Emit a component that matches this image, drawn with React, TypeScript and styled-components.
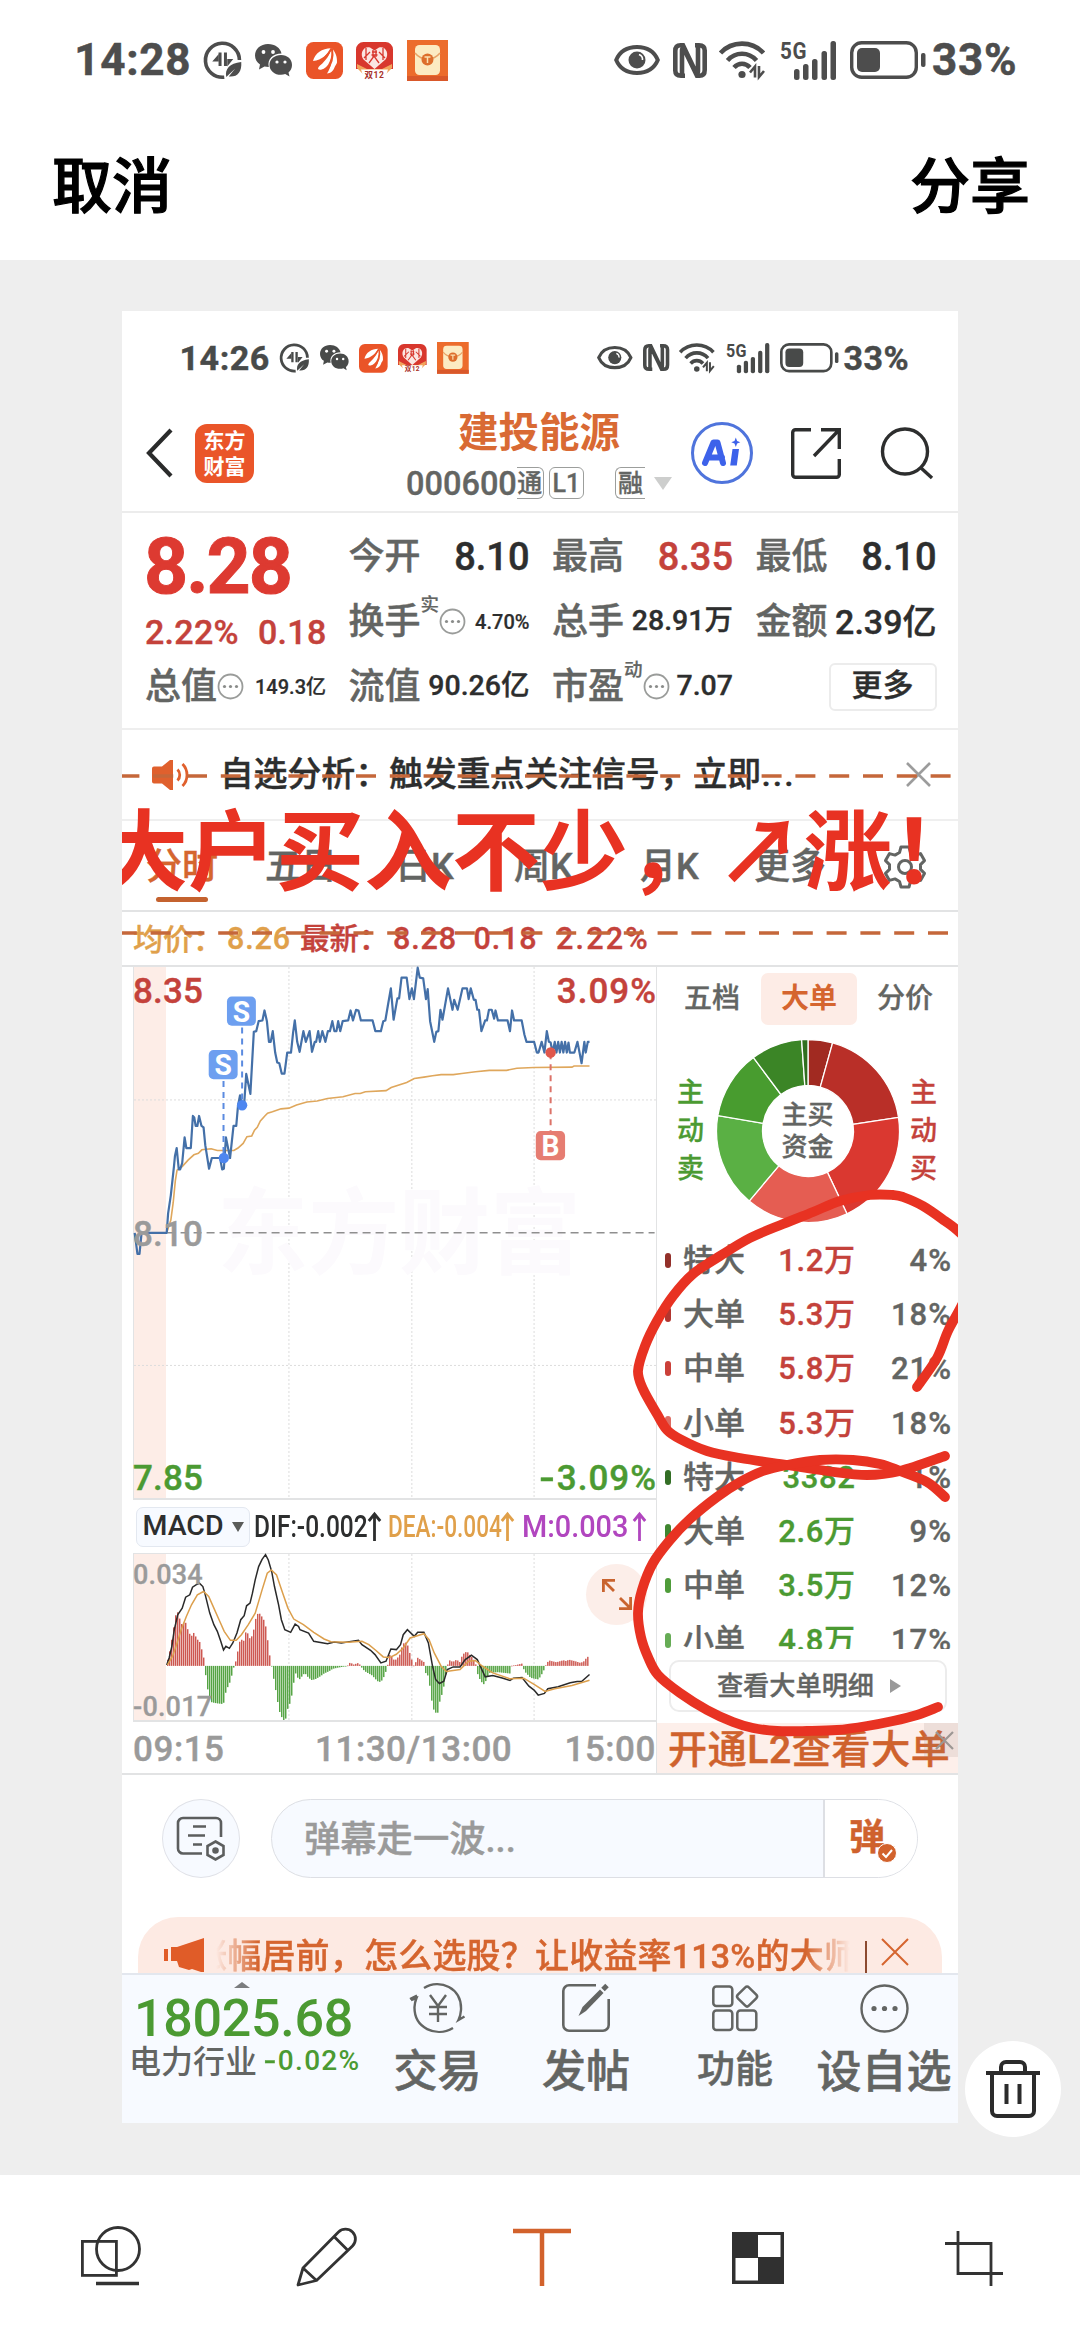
import React from "react";
import styled, { createGlobalStyle, css } from "styled-components";

const Global = createGlobalStyle`
  * {
    box-sizing: border-box;
    -webkit-text-stroke: 0.012em;
  }
  html, body { margin: 0; padding: 0; }
  body {
    width: 1080px;
    background: #fff;
    font-family: Roboto, "Noto Sans CJK SC", sans-serif;
    font-weight: 500;
    line-height: 1;
    -webkit-font-smoothing: antialiased;
  }
  svg { display: block; flex: none; overflow: visible; }
  svg text { -webkit-text-stroke: 0; }
`;

const c = {
  ink: "#2d2e2e",
  gray: "#636563",
  mute: "#9a9a9a",
  red: "#c4423b",
  green: "#4b9a32",
  orange: "#d5652f",
  amber: "#e0a04a",
  line: "#e2e3e4",
  pen: "#e83222",
};

/* ---------- shell ---------- */

const Screen = styled.div`
  width: 1080px;
  height: 2340px;
  display: flex;
  flex-direction: column;
  overflow: hidden;
  background: #fff;
`;
const ActionBar = styled.header`
  height: 140px;
  padding: 0 50px 4px 52px;
  display: flex;
  align-items: center;
  justify-content: space-between;
`;
const ActionText = styled.button`
  border: 0;
  padding: 0;
  background: none;
  font: inherit;
  font-size: 60px;
  color: #000;
  -webkit-text-stroke: 0.02em;
`;
const Canvas = styled.main`
  position: relative;
  height: 1915px;
  padding: 51px 122px 0;
  background: #eee;
`;
const Sheet = styled.section`
  position: relative;
  width: 836px;
  height: 1812px;
  overflow: hidden;
  background: #fff;
  display: flex;
  flex-direction: column;
`;
const TrashButton = styled.button`
  position: absolute;
  left: 965px;
  top: 1781px;
  width: 96px;
  height: 96px;
  border: 0;
  border-radius: 50%;
  padding: 0;
  background: #fff;
  display: grid;
  place-items: center;
`;
const ToolBar = styled.footer`
  flex: 1;
  padding: 50px 0 0 2px;
  display: grid;
  grid-template-columns: repeat(5, 216px);
  justify-items: center;
  align-items: start;
`;

/* ---------- status bar ---------- */

const StatusRow = styled.div<{ $size: number; $h: number; $tone: string }>`
  flex: none;
  height: ${(p) => p.$h}px;
  font-size: ${(p) => p.$size}px;
  font-weight: 700;
  letter-spacing: 0.015em;
  color: ${(p) => p.$tone};
  padding: 0 1.43em 0 1.69em;
  display: flex;
  align-items: center;
  justify-content: space-between;
`;
const StatusGroup = styled.div<{ $gap: number }>`
  display: flex;
  align-items: center;
  gap: ${(p) => p.$gap}em;
`;
const Glyph = styled.svg<{ $w: number; $h: number }>`
  width: ${(p) => p.$w / 44}em;
  height: ${(p) => p.$h / 44}em;
`;
const Percent = styled.span`
  margin-left: -0.15em;
`;

function StatusBar({ time, size, h, tone }: { time: string; size: number; h: number; tone: string }) {
  return (
    <StatusRow $size={size} $h={h} $tone={tone}>
      <StatusGroup $gap={0.305}>
        <span>{time}</span>
        <Glyph $w={37.5} $h={38} viewBox="0 0 37 38" fill="none" stroke="currentColor" strokeWidth="3.600">
          <path d="M20 36.200A17 17 0 1 1 35.200 19" />
          <path d="M8 20.500h6.500V13l-6.500 7.500zM23 25.500V18h6z" fill="currentColor" stroke="none" />
          <path d="M15.800 11.500V25M21.200 11.500V25" strokeWidth="3" />
          <path d="M22 36c-1.500-8 3-13.500 15-15 .8 10-4 15.500-12.500 14.500l6.500-8z" fill="currentColor" stroke="none" />
        </Glyph>
        <Glyph $w={37} $h={33} viewBox="0 0 37 33" fill="currentColor">
          <path d="M13 0C5.500 0 0 5 0 11.500c0 3.700 2 7 5 9L4 25.500l5.500-2.900c1.300.3 2.500.4 4 .4h.3C12 15 18 9.500 26.500 9.500 25.500 4 20 0 13 0z" />
          <path d="M26 11c-6.500 0-11.500 4.300-11.500 9.900S19.500 30.800 26 30.800c1.500 0 3-.2 4.200-.7l4.300 2.400-1-4c2.200-1.900 3.500-4.600 3.500-7.600C37 15.300 32.500 11 26 11z" />
          <g fill="#fff"><circle cx="8.500" cy="8" r="1.900" /><circle cx="18" cy="8" r="1.900" /><circle cx="22" cy="18" r="1.600" /><circle cx="30" cy="18" r="1.600" /></g>
        </Glyph>
        <Glyph $w={37} $h={37} viewBox="0 0 37 37">
          <rect width="37" height="37" rx="7.500" fill="#ea5428" />
          <path d="M7 19C9 11 16 6.500 25 6.200 22 12 16 18 7 19z" fill="#fff" />
          <path d="M12 27c0-1.500 1-2.500 2-3.500 6-5 10-11 11.500-17.300 1 9-2.500 20-10.500 21.500-1.500 0-2.500-.2-3-.7z" fill="#fff" />
          <path d="M21 31.500C25 26 27 15 25.800 6.200c4 4 5.500 9 5.200 14.300-.3 2-2 3-2.500 5-1 3-4 6-7.500 6z" fill="#fff" />
          <path d="M9 22C16 19.500 22 13 25.500 6.500M19 30.500C26 23 27.500 14 26 6.500" stroke="#ea5428" strokeWidth="1.900" fill="none" />
        </Glyph>
        <Glyph $w={37} $h={37} viewBox="0 0 37 37">
          <path d="M0 27V7.500A7.500 7.500 0 0 1 7.500 0h22A7.500 7.500 0 0 1 37 7.500V27z" fill="#d8372d" />
          <path d="M1 22l10 5h15l10-5v4l-6 6H7l-6-6z" fill="#f2a45c" />
          <path d="M5 27.500h27L29 37H8z" fill="#fff" />
          <path d="M18.500 27L7.500 17.500C3 11 8 3.500 14 5.500l4.500 3 4.500-3c6-2 11 5.500 6.500 12z" fill="#fbe6e2" />
          <path d="M10 6v12M14 10l-6 6M13 21l5-7 5 7M27 6v12M23 10l6 6M16 10h5M15.500 13h6M17 8v7M20 8v7" fill="none" stroke="#d8372d" strokeWidth="1.300" />
          <text x="18.500" y="35.500" fontSize="8.500" fontWeight="700" fill="#a83028" textAnchor="middle">双12</text>
        </Glyph>
        <Glyph $w={41} $h={41} viewBox="0 0 41 41">
          <rect width="41" height="41" fill="#ec6c2c" />
          <rect y="36" width="41" height="5" fill="#d9582a" />
          <rect x="8" y="5" width="25" height="30" rx="4.500" fill="#fcebc2" />
          <path d="M8 13c4 5 8 6 12.500 6S29 18 33 13" fill="none" stroke="#e8a266" strokeWidth="1.500" />
          <circle cx="20.500" cy="19.500" r="6" fill="#dd6e2c" />
          <path d="M17.500 17h6M20.500 17v6" stroke="#fbe0b0" strokeWidth="1.500" />
        </Glyph>
      </StatusGroup>
      <StatusGroup $gap={0.29}>
        <Glyph $w={46} $h={30} viewBox="0 0 46 30" fill="none" stroke="currentColor">
          <path d="M2.200 15C6 6 14 2 23 2s17 4 20.800 13C40 24 32 28 23 28S6 24 2.200 15z" strokeWidth="4" />
          <circle cx="23" cy="15" r="8.500" fill="currentColor" stroke="none" />
          <path d="M25 9.500c2.500 1 3.800 3 3.500 5.500" stroke="#fff" strokeWidth="1.600" />
        </Glyph>
        <Glyph $w={34} $h={35} viewBox="0 0 34 35" fill="none" stroke="currentColor" strokeWidth="4.600">
          <path d="M12 32.700H8c-4 0-5.700-2-5.700-5.200V8c0-4 2-5.700 5.200-5.700h2.500L22 27.500c2 3 3 3.500 3 0V1M22 2.300h4c4 0 5.700 2 5.700 5.200V27c0 4-2 5.700-5.200 5.700H24L12 8c-2-3-3-3.500-3 0v26" />
        </Glyph>
        <Glyph $w={48} $h={38} viewBox="0 0 48 38" fill="none" stroke="currentColor" strokeWidth="4.600">
          <path d="M1.500 12C13-.500 33-.500 44.500 12" />
          <path d="M8.500 19.500c8-9 21-9 29 0" />
          <path d="M15 26.500c4.500-5 11.500-5 16 0" />
          <circle cx="23" cy="33.500" r="3.600" fill="currentColor" stroke="none" />
          <path d="M31 31.500l5-6v11M40 25v11l5-6" strokeWidth="2.600" />
        </Glyph>
        <Glyph $w={57} $h={39} viewBox="0 0 57 39" fill="currentColor">
          <text x="0" y="18" fontSize="24" fontWeight="700" textLength="27" lengthAdjust="spacingAndGlyphs">5G</text>
          <rect x="14" y="28" width="5.500" height="11" rx="2.500" />
          <rect x="23" y="23" width="5.500" height="16" rx="2.500" />
          <rect x="32" y="18" width="5.500" height="21" rx="2.500" />
          <rect x="41.500" y="10" width="5.500" height="29" rx="2.500" />
          <rect x="50.500" y="0" width="5.500" height="39" rx="2.500" />
        </Glyph>
        <Glyph $w={76} $h={38} viewBox="0 0 76 38" fill="currentColor">
          <rect x="1.700" y="1.700" width="64.600" height="34.600" rx="10" fill="none" stroke="currentColor" strokeWidth="3.400" />
          <rect x="7" y="7" width="23" height="24" rx="5" />
          <rect x="71" y="12" width="4.500" height="14" rx="2" />
        </Glyph>
        <Percent>33%</Percent>
      </StatusGroup>
    </StatusRow>
  );
}

/* ---------- title bar ---------- */

const TitleBar = styled.div`
  flex: none;
  height: 108px;
  padding: 0 0 10px 24px;
  border-bottom: 2px solid #ececec;
  display: flex;
  align-items: center;
`;
const BrandLogo = styled.div`
  width: 59px;
  height: 59px;
  margin-left: 23px;
  border-radius: 12px;
  background: #ea5529;
  color: #fff;
  font-size: 21px;
  font-weight: 700;
  line-height: 26px;
  padding-top: 4px;
  text-align: center;
  -webkit-text-stroke: 0;
`;
const StockHead = styled.div`
  width: 266px;
  margin: 7px 19px 0 152px;
  display: flex;
  flex-direction: column;
  align-items: center;
  gap: 14px;
`;
const StockName = styled.h1`
  margin: 0;
  font-size: 40.500px;
  font-weight: 700;
  -webkit-text-stroke: 0;
  color: #d96a34;
`;
const CodeRow = styled.div`
  width: 266px;
  height: 32px;
  display: flex;
  align-items: center;
  color: ${c.gray};
  font-size: 32.500px;
`;
const Tag = styled.span<{ $w: number; $cut?: "left" | "right"; $ml?: number }>`
  width: ${(p) => p.$w}px;
  height: 32px;
  margin-left: ${(p) => p.$ml ?? 0}px;
  margin-top: -2px;
  border: 1.500px solid #9c9e9c;
  border-radius: 6px;
  ${(p) => p.$cut === "left" && css`border-left: 0; border-top-left-radius: 0; border-bottom-left-radius: 0;`}
  ${(p) => p.$cut === "right" && css`border-right: 0; border-top-right-radius: 0; border-bottom-right-radius: 0;`}
  font-size: 25px;
  line-height: 31px;
  text-align: center;
  white-space: nowrap;
`;
const CaretDown = styled.span<{ $w: number; $h: number; $tone: string; $ml?: number }>`
  margin-left: ${(p) => p.$ml ?? 0}px;
  border-left: ${(p) => p.$w / 2}px solid transparent;
  border-right: ${(p) => p.$w / 2}px solid transparent;
  border-top: ${(p) => p.$h}px solid ${(p) => p.$tone};
`;
const IconSlot = styled.div<{ $ml: number }>`
  margin-left: ${(p) => p.$ml}px;
`;

/* ---------- quote ---------- */

const Quote = styled.div`
  flex: none;
  height: 217px;
  padding: 11px 22px 0 23px;
  border-bottom: 2px solid #eee;
  display: grid;
  grid-template-columns: repeat(4, 181px);
  column-gap: 22.500px;
  grid-template-rows: repeat(3, 65px);
`;
const PriceBlock = styled.div`
  grid-row: span 2;
  color: ${c.red};
`;
const Price = styled.div`
  margin-top: 5px;
  font-size: 77px;
  font-weight: 700;
  letter-spacing: -2px;
  text-indent: -1px;
  color: #dd3a31;
`;
const Change = styled.div`
  display: flex;
  gap: 19px;
  margin-top: 9px;
  font-size: 34px;
  letter-spacing: 0.300px;
`;
const Cell = styled.div`
  display: flex;
  align-items: center;
  justify-content: space-between;
  white-space: nowrap;
`;
const CellLabel = styled.span`
  display: flex;
  align-items: center;
  font-size: 36px;
  color: ${c.gray};
`;
const Sup = styled.sup`
  font-size: 18.500px;
  line-height: 1;
  align-self: flex-start;
  margin-top: -8px;
`;
const CellValue = styled.span<{ $size: number; $tone?: string }>`
  font-size: ${(p) => p.$size}px;
  color: ${(p) => p.$tone ?? c.ink};
`;
const MoreButton = styled.button`
  justify-self: end;
  align-self: center;
  width: 108px;
  height: 48px;
  border: 2px solid #ececec;
  border-radius: 6px;
  padding: 0 0 2px;
  background: #fff;
  font: inherit;
  font-size: 31px;
  color: ${c.ink};
`;

const Dots = () => (
  <svg width="27" height="27" viewBox="0 0 27 27">
    <circle cx="13.500" cy="13.500" r="12" fill="none" stroke="#9a9c9a" strokeWidth="1.800" />
    <g fill="#8a8c8a"><circle cx="7.500" cy="13.500" r="1.600" /><circle cx="13.500" cy="13.500" r="1.600" /><circle cx="19.500" cy="13.500" r="1.600" /></g>
  </svg>
);

function QuoteCell(p: { label: string; sup?: string; dots?: boolean; value: string; size: number; tone?: string }) {
  return (
    <Cell>
      <CellLabel>{p.label}{p.sup && <Sup>{p.sup}</Sup>}{p.dots && <Dots />}</CellLabel>
      <CellValue $size={p.size} $tone={p.tone}>{p.value}</CellValue>
    </Cell>
  );
}

/* ---------- notice, tabs, legend ---------- */

const Notice = styled.div`
  flex: none;
  height: 91px;
  padding: 0 27px 0 30px;
  border-bottom: 2px solid #efefef;
  display: flex;
  align-items: center;
`;
const NoticeText = styled.span`
  flex: 1;
  margin-left: 30px;
  font-size: 33.700px;
  letter-spacing: 0.150px;
  color: ${c.ink};
`;
const Ellipsis = styled.span`
  letter-spacing: 2px;
`;
const Tabs = styled.nav`
  flex: none;
  height: 91px;
  padding: 3px 0 0 24px;
  border-bottom: 2px solid ${c.line};
  display: grid;
  grid-template-columns: 119px 130px 119px 126px 114px 129px 44px;
  align-items: center;
`;
const Tab = styled.div<{ $on?: boolean }>`
  position: relative;
  font-size: 36px;
  white-space: nowrap;
  color: ${(p) => (p.$on ? c.orange : c.gray)};
  ${(p) => p.$on && css`
    &::after {
      content: "";
      position: absolute;
      left: 10px;
      top: 48px;
      width: 52px;
      height: 5px;
      border-radius: 3px;
      background: #c4622f;
    }
  `}
`;
const Legend = styled.div`
  flex: none;
  height: 55px;
  padding: 2px 0 0 11px;
  border-bottom: 2px solid ${c.line};
  display: flex;
  align-items: center;
  white-space: nowrap;
`;
const LegendItem = styled.span<{ $w: number; $tone?: string; $size?: number; $track?: number }>`
  width: ${(p) => p.$w}px;
  font-size: ${(p) => p.$size ?? 30.5}px;
  letter-spacing: ${(p) => p.$track ?? (p.$size ? 0 : 0.9)}px;
  color: ${(p) => p.$tone ?? c.red};
`;

/* ---------- charts ---------- */

const Board = styled.div`
  flex: none;
  height: 808px;
  display: grid;
  grid-template-columns: 535px 301px;
  border-bottom: 2px solid ${c.line};
`;
const ChartColumn = styled.div`
  padding-left: 11px;
  display: flex;
  flex-direction: column;
  border-right: 1px solid ${c.line};
`;
const ChartBox = styled.div<{ $h: number }>`
  position: relative;
  height: ${(p) => p.$h}px;
  border-left: 1px solid ${c.line};
  border-bottom: 2px solid ${c.line};
  background: linear-gradient(to right, #fdede7 32px, #fff 32px);
`;
const AxisLabel = styled.span<{ $top: number; $right?: boolean; $tone: string; $size: number }>`
  position: absolute;
  top: ${(p) => p.$top}px;
  ${(p) => (p.$right ? "right: -1px;" : "left: -1px;")}
  font-size: ${(p) => p.$size}px;
  letter-spacing: ${(p) => (p.$right ? 1 : 0.2)}px;
  color: ${(p) => p.$tone};
`;
const Minus = styled.span<{ $gap: number }>`
  display: inline-block;
  transform: scaleX(1.3);
  transform-origin: right center;
  margin-right: ${(p) => p.$gap}px;
`;
const Indicator = styled.div`
  height: 54px;
  display: flex;
  align-items: center;
  border-bottom: 1px solid ${c.line};
  font-size: 31px;
  white-space: nowrap;
`;
const IndicatorPick = styled.div`
  flex: none;
  width: 114px;
  height: 40px;
  margin: 0 4px 0 3px;
  border: 1px solid #e3e8f0;
  border-radius: 7px;
  background: #f7faff;
  color: ${c.ink};
  display: flex;
  align-items: center;
  justify-content: center;
  font-size: 28.500px;
  -webkit-text-stroke: 0;
  gap: 8px;
`;
const Reading = styled.span<{ $w: number; $sx: number; $tone: string }>`
  flex: none;
  width: ${(p) => p.$w}px;
  color: ${(p) => p.$tone};
  & > b {
    display: inline-block;
    font-weight: 500;
    transform: scaleX(${(p) => p.$sx});
    transform-origin: left center;
    -webkit-text-stroke: 0;
  }
`;
const TimeAxis = styled.div`
  flex: 1;
  padding: 3px 0 0;
  display: grid;
  grid-template-columns: 182px 1fr auto;
  align-items: center;
  font-size: 35px;
  letter-spacing: 0.550px;
  color: ${c.mute};
`;
const ExpandButton = styled.button`
  position: absolute;
  left: 452px;
  top: 10px;
  width: 61px;
  height: 61px;
  border: 0;
  border-radius: 50%;
  padding: 0;
  background: #fceee9;
  display: grid;
  place-items: center;
`;

type Pt = [number, number];
const parse = (s: string): Pt[] => s.trim().split(/\s+/).map((p) => p.split(",").map(Number) as Pt);

const priceLine = parse(`40,766 48,825 54,825 60,766 133,766 137,712 145,660 154,580 157,550 162,528 168,588 172,588 178,570 185,498 190,528 203,528 209,438
 213,442 217,466 222,466 227,438 234,466 240,470 245,520 256,586 264,556 288,556 294,588 299,586 305,498 317,556 327,466 335,466 340,410 346,380 352,408 358,405
 364,320 376,376 386,202 393,200 400,172 411,170 417,142 424,172 430,230 435,230 441,200 448,260 454,288 460,290 467,319 475,319 483,260 494,260 500,205 505,170
 512,230 519,258 530,200 537,230 548,200 555,258 563,230 567,230 573,200 578,230 585,200 594,230 601,200 607,200 614,172 620,200 626,200 631,172 637,200 644,172
 660,170 667,142 674,170 683,140 690,142 697,170 731,170 739,200 755,200 762,172 768,170 775,130 784,80 792,168 803,108 808,108 815,50 830,50 838,110 845,80
 851,110 862,22 868,50 878,52 886,110 891,82 898,172 910,230 916,202 922,200 928,140 934,168 950,80 963,140 968,112 978,140 992,80 1005,80 1010,110 1016,80
 1025,112 1030,112 1035,140 1040,140 1047,200 1058,170 1063,170 1069,140 1077,140 1084,165 1088,142 1095,170 1123,170 1130,200 1136,142 1142,170 1164,170
 1172,210 1178,230 1200,230 1208,260 1213,260 1222,230 1230,260 1237,200 1243,230 1248,232 1254,260 1260,230 1265,260 1270,230 1275,260 1280,230 1285,260
 1290,230 1295,260 1300,232 1304,260 1317,260 1326,230 1338,290 1346,230 1350,260 1356,230 1361,230`);
const averageLine = parse(`133,766 145,730 152,680 158,620 163,590 178,580 195,562 212,547 225,543 235,533 262,530 280,535 328,535 340,528 355,515 366,496 380,494
 388,478 396,470 405,452 418,438 426,430 440,426 465,418 488,416 510,407 540,399 570,396 600,389 645,384 680,375 695,375 710,370 770,367 785,358 830,344 852,333
 880,329 905,325 930,322 965,322 990,319 1030,314 1070,310 1120,310 1150,304 1200,302 1310,301 1316,298 1361,298`);
const difLine = parse(`133,556 140,535 148,500 155,450 165,405 178,385 188,352 200,345 208,322 218,315 228,310 238,320 245,345 258,400 270,435 280,455 290,485
 298,511 305,500 315,506 325,490 337,460 348,420 358,408 365,378 375,370 382,340 390,300 400,260 410,238 420,224 428,240 438,275 446,320 458,375 466,420 476,450
 493,458 506,433 516,440 520,450 545,460 560,485 600,492 620,487 640,490 690,482 700,495 725,512 738,525 755,550 770,545 784,508 800,510 812,495 820,465 832,450
 852,470 862,458 880,458 893,490 905,560 914,600 925,612 938,605 948,570 965,562 985,562 1000,540 1018,527 1035,540 1058,592 1080,588 1110,596 1130,603 1140,596
 1165,594 1185,620 1200,632 1212,647 1230,642 1240,628 1270,622 1305,610 1325,606 1338,606 1361,585`);
const deaLine = parse(`135,556 150,530 160,500 175,450 190,410 205,375 222,345 240,335 255,350 270,385 285,420 300,455 318,482 335,482 350,465 370,435 390,400
 410,330 425,280 437,270 452,285 470,340 485,385 502,418 530,435 560,458 590,478 610,486 660,488 700,485 720,495 740,512 762,532 780,534 800,524 820,505 840,475
 880,462 895,480 910,520 930,560 945,576 985,570 1010,545 1030,543 1050,560 1080,580 1130,598 1170,596 1200,615 1232,636 1260,628 1310,618 1361,602`);
const histogram = parse(`135,545 143,510 150,465 157,420 162,390 168,405 173,425 180,440 185,418 190,435 197,458 205,470 210,457 216,468 223,480 229,487 235,510
 242,540 243,559 245,575 250,618 256,650 262,668 270,670 280,672 298,674 303,645 308,628 314,615 320,600 325,570 330,559 335,540 340,512 346,482 352,480 356,487
 362,458 368,460 376,480 384,460 389,432 393,410 400,398 406,405 414,418 419,430 424,460 430,512 436,552 438,559 440,575 446,610 452,645 459,690 465,710 473,722
 478,722 484,690 490,675 496,650 502,610 507,580 517,602 528,588 534,580 545,595 555,602 567,598 580,590 590,582 605,575 615,568 632,564 655,560 662,556 667,545
 673,556 690,550 697,559 700,565 708,575 730,588 745,605 755,608 765,590 774,563 779,530 784,520 790,540 800,540 810,525 815,505 822,490 831,488 836,510 842,530
 850,558 854,558 860,533 870,540 881,548 885,580 893,590 898,625 905,680 912,700 921,700 928,655 935,640 941,600 947,565 951,548 957,540 963,548 975,540 985,548
 992,525 1005,515 1015,528 1022,535 1030,550 1035,580 1045,605 1055,615 1062,600 1070,580 1095,578 1130,582 1132,559 1145,557 1165,552 1172,575 1190,595
 1213,600 1222,585 1232,565 1236,550 1245,543 1265,548 1285,542 1295,545 1300,540 1320,545 1335,550 1345,545 1352,535 1362,527`);

const toPoints = (pts: Pt[]) => pts.map((p) => p.join(",")).join(" ");

const ZERO = 559;
function bars() {
  const out: Pt[] = [];
  let i = 0;
  for (let x = 136; x <= 1361; x += 5.81) {
    while (histogram[i + 1][0] < x) i++;
    const [x0, y0] = histogram[i];
    const [x1, y1] = histogram[i + 1];
    out.push([x, y0 + ((y1 - y0) * (x - x0)) / (x1 - x0)]);
  }
  return out;
}

/* Catmull-Rom spline through the points of a hand-drawn stroke. */
function spline(pts: Pt[]) {
  let d = `M${pts[0][0]} ${pts[0][1]}`;
  for (let i = 0; i < pts.length - 1; i++) {
    const a = pts[Math.max(i - 1, 0)];
    const b = pts[i];
    const e = pts[i + 1];
    const f = pts[Math.min(i + 2, pts.length - 1)];
    d += `C${b[0] + (e[0] - a[0]) / 6} ${b[1] + (e[1] - a[1]) / 6} ${e[0] - (f[0] - b[0]) / 6} ${e[1] - (f[1] - b[1]) / 6} ${e[0]} ${e[1]}`;
  }
  return d;
}

const Fixed = { vectorEffect: "non-scaling-stroke" } as const;

function PriceChart() {
  return (
    <svg width="523" height="531" viewBox="38 20 1519 1490" preserveAspectRatio="none">
      <g stroke="#dcdcdc" strokeWidth="1" strokeDasharray="2 2">
        {[488, 845, 1200].map((x) => <line key={x} x1={x} x2={x} y1="20" y2="1510" {...Fixed} />)}
        {[393, 1138].map((y) => <line key={y} y1={y} y2={y} x1="38" x2="1556" {...Fixed} />)}
      </g>
      <text x="280" y="862" fontSize="264" fontWeight="700" fill="#fcfafd" textLength="1056" lengthAdjust="spacingAndGlyphs">东方财富</text>
      <line x1="60" x2="1550" y1="766" y2="766" stroke="#8f8f8f" strokeWidth="1.500" strokeDasharray="8 5" {...Fixed} />
      <polyline points={toPoints(averageLine)} fill="none" stroke="#dfa75c" strokeWidth="1.600" {...Fixed} />
      <polyline points={toPoints(priceLine)} fill="none" stroke="#4470a8" strokeWidth="2.200" strokeLinejoin="round" {...Fixed} />
      <g fontWeight="700" fontSize="82" fill="#fff" textAnchor="middle">
        <path d="M352 190V400M298 340V548" stroke="#5b8be0" strokeWidth="2" strokeDasharray="6 5" {...Fixed} />
        <path d="M1248 262V480" stroke="#dc7268" strokeWidth="2" strokeDasharray="6 5" {...Fixed} />
        <circle cx="352" cy="408" r="15" fill="#4d86f0" />
        <circle cx="299" cy="556" r="15" fill="#4d86f0" />
        <circle cx="1248" cy="260" r="15" fill="#e0574c" />
        <rect x="308" y="103" width="84" height="82" rx="14" fill="#6d9ff0" />
        <text x="350" y="174">S</text>
        <rect x="255" y="253" width="84" height="82" rx="14" fill="#6d9ff0" />
        <text x="297" y="323">S</text>
        <rect x="1205" y="480" width="85" height="82" rx="14" fill="#e67d72" />
        <text x="1248" y="551">B</text>
      </g>
    </svg>
  );
}

function MacdChart() {
  return (
    <svg width="523" height="167" viewBox="38 222 1519 503" preserveAspectRatio="none">
      {[488, 845, 1200].map((x) => <line key={x} x1={x} x2={x} y1="222" y2="725" stroke="#dcdcdc" strokeDasharray="2 2" {...Fixed} />)}
      {bars().map(([x, y]) => (
        <rect key={x} x={x - 1.9} width="3.800" y={Math.min(y, ZERO)} height={Math.max(2, Math.abs(y - ZERO))} fill={y < ZERO ? "#c8473f" : "#439a30"} />
      ))}
      <polyline points={toPoints(difLine)} fill="none" stroke="#2a2a2a" strokeWidth="1.500" {...Fixed} />
      <polyline points={toPoints(deaLine)} fill="none" stroke="#dc9f4c" strokeWidth="1.500" {...Fixed} />
    </svg>
  );
}

const UpArrow = ({ tone }: { tone: string }) => (
  <svg width="13" height="29" viewBox="0 0 13 29" fill="none" stroke={tone} strokeWidth="2.800">
    <path d="M6.500 29V2M.800 9l5.700-7 5.700 7" />
  </svg>
);
const ReadingArrow = styled.span<{ $w: number }>`
  flex: none;
  width: ${(p) => p.$w}px;
`;

/* ---------- order panel ---------- */

const OrderPanel = styled.div`
  display: flex;
  flex-direction: column;
`;
const OrderTabs = styled.div`
  height: 64px;
  padding: 0 5px 0 6px;
  display: grid;
  grid-template-columns: 98px 96px 1fr;
  align-items: center;
  font-size: 28px;
  text-align: center;
  color: ${c.gray};
`;
const OrderTab = styled.span<{ $on?: boolean }>`
  ${(p) => p.$on && css`
    height: 52px;
    line-height: 51px;
    border-radius: 7px;
    background: #fdece6;
    color: ${c.orange};
    font-weight: 700;
    -webkit-text-stroke: 0;
  `}
`;
const DonutRow = styled.div`
  height: 202px;
  padding: 0 20px 2px 20px;
  display: flex;
  align-items: center;
  justify-content: space-between;
`;
const SideWord = styled.span<{ $tone: string }>`
  width: 28px;
  font-size: 27px;
  line-height: 38px;
  color: ${(p) => p.$tone};
`;
const DonutBox = styled.div`
  position: relative;
  width: 184px;
  height: 184px;
`;
const DonutText = styled.div`
  position: absolute;
  inset: 0;
  display: grid;
  place-content: center;
  text-align: center;
  font-size: 26px;
  line-height: 32px;
  color: ${c.gray};
`;
const OrderList = styled.div`
  height: 416px;
  overflow: hidden;
`;
const OrderRow = styled.div`
  height: 54.300px;
  padding: 0 6px 0 8px;
  display: grid;
  grid-template-columns: 18px 70px 101.500px 1fr;
  align-items: center;
  font-size: 31px;
  color: ${c.gray};
`;
const Marker = styled.i<{ $tone: string }>`
  width: 5.500px;
  height: 15px;
  border-radius: 3px;
  background: ${(p) => p.$tone};
`;
const Amount = styled.span<{ $tone: string }>`
  text-align: right;
  letter-spacing: 0.600px;
  margin-right: -1px;
  color: ${(p) => p.$tone};
`;
const Share = styled.span`
  text-align: right;
  letter-spacing: 1px;
`;
const DetailButton = styled.button`
  height: 52px;
  margin: 11px 11px 11px 12px;
  border: 2px solid #ececec;
  border-radius: 10px;
  padding: 0 0 0 2px;
  background: #fff;
  font: inherit;
  font-size: 26.200px;
  color: ${c.gray};
  display: flex;
  align-items: center;
  justify-content: center;
  gap: 16px;
`;
const CaretRight = styled.span`
  border-top: 7.500px solid transparent;
  border-bottom: 7.500px solid transparent;
  border-left: 11px solid ${c.mute};
`;
const Promo = styled.div`
  position: relative;
  flex: 1;
  background: #fdefea;
  padding: 4px 0 0 11px;
  display: flex;
  align-items: center;
  white-space: nowrap;
  font-size: 39px;
  letter-spacing: 0.650px;
  color: #cf622d;
`;
const PromoClose = styled.span`
  position: absolute;
  right: 0;
  top: 0;
  width: 34px;
  height: 34px;
  background: rgba(150, 130, 120, 0.15);
  display: grid;
  place-items: center;
  padding-left: 6px;
`;

const slices: [number, number, string][] = [
  [0, 15.6, "#a12a21"],
  [15.6, 81.5, "#b92f28"],
  [81.5, 154.8, "#da3830"],
  [154.8, 220, "#e55d52"],
  [220, 279.7, "#5ab044"],
  [279.7, 323.4, "#489c2f"],
  [323.4, 356, "#3b8526"],
  [356, 360, "#316f20"],
];
function slicePath(a: number, b: number) {
  const at = (deg: number, r: number) => {
    const t = (deg * Math.PI) / 180;
    return `${92 + r * Math.sin(t)} ${92 - r * Math.cos(t)}`;
  };
  return `M${at(a, 91.5)}A91.500 91.500 0 0 1 ${at(b, 91.5)}L${at(b, 45.5)}A45.500 45.500 0 0 0 ${at(a, 45.5)}Z`;
}

const orders: [string, string, string, string, string][] = [
  ["特大", "1.2万", "4%", "#93302a", c.red],
  ["大单", "5.3万", "18%", "#b23630", c.red],
  ["中单", "5.8万", "21%", "#cb4039", c.red],
  ["小单", "5.3万", "18%", "#dd6c63", c.red],
  ["特大", "3382", "1%", "#336e25", c.green],
  ["大单", "2.6万", "9%", "#3f8630", c.green],
  ["中单", "3.5万", "12%", "#4f9c3a", c.green],
  ["小单", "4.8万", "17%", "#66ac55", c.green],
];

/* ---------- lower area ---------- */

const BarrageRow = styled.div`
  flex: none;
  height: 142px;
  padding: 24px 40px 0 40px;
  display: flex;
  align-items: flex-start;
`;
const RoundButton = styled.div`
  width: 78px;
  height: 79px;
  border: 1.500px solid #e0e2e8;
  border-radius: 50%;
  background: #f7faff;
  display: grid;
  place-items: center;
`;
const BarrageInput = styled.div`
  width: 647px;
  height: 79px;
  margin-left: 31px;
  border: 1.500px solid #dddfe4;
  border-radius: 40px;
  overflow: hidden;
  background: #f7faff;
  display: flex;
`;
const Placeholder = styled.span`
  flex: 1;
  padding-left: 32px;
  line-height: 80px;
  font-size: 36.300px;
  color: ${c.mute};
  border-right: 2px solid #dddfe4;
`;
const SendToggle = styled.div`
  position: relative;
  width: 92px;
  padding-left: 24px;
  background: #fff;
  line-height: 77px;
  font-size: 36px;
  font-weight: 700;
  color: #cf622d;
`;
const SendCheck = styled.svg`
  position: absolute;
  left: 52px;
  top: 43px;
`;
const Ticker = styled.div`
  flex: none;
  height: 56px;
  margin: 0 16px;
  padding: 21px 33px 0 26px;
  border-radius: 40px 40px 0 0;
  background: #fdeae3;
  display: flex;
  align-items: flex-start;
  color: ${c.orange};
`;
const TickerText = styled.div`
  width: 657px;
  height: 36px;
  margin-left: 4px;
  overflow: hidden;
  white-space: nowrap;
  font-size: 34px;
  line-height: 36px;
  letter-spacing: 0.200px;
  text-indent: -15px;
  mask-image: linear-gradient(to right, transparent 8px, #000 50px, #000 598px, transparent 642px);
`;
const TickerRule = styled.i`
  width: 1.500px;
  height: 32px;
  margin: 3px 14px 0 0;
  background: #8c4a30;
`;
const BottomNav = styled.nav`
  flex: 1;
  position: relative;
  border-top: 2px solid #e3e7ee;
  background: #f7faff;
  display: grid;
  grid-template-columns: 241px 148px 149px 149px 149px;
`;
const IndexBlock = styled.div`
  padding: 7px 0 0 7px;
  display: flex;
  flex-direction: column;
  white-space: nowrap;
`;
const CaretUp = styled.span`
  align-self: flex-start;
  margin-left: 105px;
  border-left: 8.500px solid transparent;
  border-right: 8.500px solid transparent;
  border-bottom: 6px solid #7b7d7f;
`;
const IndexValue = styled.div`
  margin: 5px 0 0 5px;
  font-size: 52px;
  letter-spacing: -0.300px;
  color: ${c.green};
  -webkit-text-stroke: 0;
`;
const IndexMeta = styled.div`
  margin-top: 1px;
  display: flex;
  align-items: center;
  gap: 10px;
  font-size: 32px;
  color: ${c.gray};
  -webkit-text-stroke: 0;
`;
const IndexChange = styled.span`
  font-size: 28px;
  letter-spacing: 1.300px;
  margin-top: -2px;
  color: ${c.green};
  -webkit-text-stroke: 0;
`;
const NavItem = styled.div<{ $size: number }>`
  padding: 7px 0 0 1px;
  display: flex;
  flex-direction: column;
  align-items: center;
  font-size: ${(p) => p.$size}px;
  white-space: nowrap;
  color: ${c.gray};
`;
const NavIcon = styled.div`
  height: 52px;
  display: grid;
  place-items: center;
`;
const NavLabel = styled.span`
  height: 46px;
  margin-top: 16px;
`;

/* ---------- annotations drawn on the screenshot ---------- */

const Caption = styled.div`
  position: absolute;
  left: -22px;
  top: 498px;
  font-size: 88px;
  font-weight: 700;
  line-height: 88px;
  white-space: nowrap;
  color: ${c.pen};
  -webkit-text-stroke: 0;
`;
const Strokes = styled.svg`
  position: absolute;
  left: 0;
  top: 0;
`;
const strokeA = parse(`917,1387 937,1358 948,1331 962,1305 975,1275 970,1245 958,1231 945,1221 923,1206 903,1197 893,1195 870,1195 840,1201 813,1212 783,1224
 750,1238 720,1256 693,1274 673,1296 657,1321 645,1346 638,1371 643,1389 657,1414 667,1430 680,1439 707,1451 740,1458 787,1465 827,1471 867,1475 900,1471 945,1456`);
const strokeB = parse(`945,1497 927,1482 900,1471 880,1464 853,1460 820,1460 787,1465 763,1471 740,1482 717,1497 690,1519 670,1540 653,1563 642,1590 638,1613
 641,1637 648,1657 658,1675 680,1693 707,1710 733,1722 753,1728 777,1731 807,1731 837,1730 867,1726 893,1721 917,1715 938,1707`);

const Cross = ({ s, w, tone }: { s: number; w: number; tone: string }) => (
  <svg width={s} height={s} viewBox={`0 0 ${s} ${s}`} stroke={tone} strokeWidth={w}>
    <path d={`M1 1L${s - 1} ${s - 1}M${s - 1} 1L1 ${s - 1}`} />
  </svg>
);

export default function App() {
  return (
    <Screen>
      <Global />
      <StatusBar time="14:28" size={44} h={120} tone="#4d4d4d" />
      <ActionBar>
        <ActionText>取消</ActionText>
        <ActionText>分享</ActionText>
      </ActionBar>

      <Canvas>
        <Sheet>
          <StatusBar time="14:26" size={34.06} h={94} tone="#484a49" />

          <TitleBar>
            <svg width="26" height="48" viewBox="0 0 26 48" fill="none" stroke="#2a2b2b" strokeWidth="4.200">
              <path d="M25 1L3 24l22 23" />
            </svg>
            <BrandLogo>东方<br />财富</BrandLogo>
            <StockHead>
              <StockName>建投能源</StockName>
              <CodeRow>
                <span>000600</span>
                <Tag $w={27} $cut="left">通</Tag>
                <Tag $w={36} $ml={5}>L1</Tag>
                <Tag $w={30} $cut="right" $ml={31}>融</Tag>
                <CaretDown $w={18} $h={13} $tone="#cdcecd" $ml={9} />
              </CodeRow>
            </StockHead>
            <svg width="62" height="62" viewBox="0 0 62 62">
              <circle cx="31" cy="31" r="29.500" fill="#fff" stroke="#4f74dc" strokeWidth="3" />
              <path d="M14 41L22.500 20.500h4L32 41M18 35.500h13" fill="none" stroke="#3d62ea" strokeWidth="6" strokeLinejoin="round" strokeLinecap="round" />
              <path d="M41.500 27h6.500l-2.200 16.500h-6.600zM44.800 15.500l1.300 3.400 3.200 1.300-3.200 1.300-1.300 3.400-1.300-3.400-3.200-1.300 3.200-1.300z" fill="#3d62ea" />
            </svg>
            <IconSlot $ml={38}>
              <svg width="50" height="51" viewBox="0 0 50 51" fill="none" stroke="#2d2e2e" strokeWidth="3.400">
                <path d="M20 1.700H4.500a2.800 2.800 0 0 0-2.800 2.800v42a2.800 2.800 0 0 0 2.800 2.800h41a2.800 2.800 0 0 0 2.800-2.800V31M30 1.700h18.300V21M48 2L23 28" />
              </svg>
            </IconSlot>
            <IconSlot $ml={40}>
              <svg width="52" height="52" viewBox="0 0 52 52" fill="none" stroke="#2d2e2e" strokeWidth="3.400">
                <circle cx="24" cy="24.500" r="22.500" />
                <path d="M39.500 40.500L51 51" />
              </svg>
            </IconSlot>
          </TitleBar>

          <Quote>
            <PriceBlock>
              <Price>8.28</Price>
              <Change><span>2.22%</span><span>0.18</span></Change>
            </PriceBlock>
            <QuoteCell label="今开" value="8.10" size={38} />
            <QuoteCell label="最高" value="8.35" size={38} tone={c.red} />
            <QuoteCell label="最低" value="8.10" size={38} />
            <QuoteCell label="换手" sup="实" dots value="4.70%" size={20} />
            <QuoteCell label="总手" value="28.91万" size={28.5} />
            <QuoteCell label="金额" value="2.39亿" size={34} />
            <QuoteCell label="总值" dots value="149.3亿" size={20} />
            <QuoteCell label="流值" value="90.26亿" size={28.5} />
            <QuoteCell label="市盈" sup="动" dots value="7.07" size={28.5} />
            <MoreButton>更多</MoreButton>
          </Quote>

          <Notice>
            <svg width="38" height="30" viewBox="0 0 38 30" fill="#e0602d">
              <path d="M2 6.500h8L18 0h3v30h-3l-8-6.500H2a2 2 0 0 1-2-2v-13a2 2 0 0 1 2-2z" />
              <path d="M25.500 9.500c3 3 3 8 0 11M30.500 4c6 6 6 16 0 22" fill="none" stroke="#e0602d" strokeWidth="2.800" />
            </svg>
            <NoticeText>自选分析：触发重点关注信号，立即<Ellipsis>...</Ellipsis></NoticeText>
            <Cross s={25} w={2.6} tone="#9c9c9c" />
          </Notice>

          <Tabs>
            <Tab $on>分时</Tab>
            <Tab>五日</Tab>
            <Tab>日K</Tab>
            <Tab>周K</Tab>
            <Tab>月K</Tab>
            <Tab>更多</Tab>
            <svg width="44" height="44" viewBox="0 0 44 44" fill="none" stroke="#636563" strokeWidth="3" strokeLinejoin="round">
              <path d="M18 2h8l1.500 5.500 4.500 2.600 5.500-1.500 4 7-4 4v4.800l4 4-4 7-5.500-1.500-4.500 2.600L26 42h-8l-1.500-5.500-4.500-2.600-5.500 1.500-4-7 4-4v-4.800l-4-4 4-7 5.500 1.500 4.500-2.600z" />
              <circle cx="22" cy="22" r="6.500" />
            </svg>
          </Tabs>

          <Legend>
            <LegendItem $w={94} $size={30} $tone={c.amber}>均价：</LegendItem>
            <LegendItem $w={73} $tone={c.amber}>8.26</LegendItem>
            <LegendItem $w={93} $size={29.5}>最新：</LegendItem>
            <LegendItem $w={80.5}>8.28</LegendItem>
            <LegendItem $w={82.5}>0.18</LegendItem>
            <LegendItem $w={100} $track={2.2}>2.22%</LegendItem>
          </Legend>

          <Board>
            <ChartColumn>
              <ChartBox $h={533}>
                <PriceChart />
                <AxisLabel $top={7} $tone={c.red} $size={35}>8.35</AxisLabel>
                <AxisLabel $top={7} $tone={c.red} $size={35} $right>3.09%</AxisLabel>
                <AxisLabel $top={250} $tone={c.mute} $size={35}>8.10</AxisLabel>
                <AxisLabel $top={494} $tone={c.green} $size={35}>7.85</AxisLabel>
                <AxisLabel $top={494} $tone={c.green} $size={35} $right><Minus $gap={1}>-</Minus>3.09%</AxisLabel>
              </ChartBox>
              <Indicator>
                <IndicatorPick>MACD<CaretDown $w={12} $h={10} $tone="#5a5c5a" /></IndicatorPick>
                <Reading $w={114} $sx={0.79} $tone={c.ink}><b>DIF:-0.002</b></Reading>
                <ReadingArrow $w={20}><UpArrow tone={c.ink} /></ReadingArrow>
                <Reading $w={113} $sx={0.73} $tone={c.amber}><b>DEA:-0.004</b></Reading>
                <ReadingArrow $w={21}><UpArrow tone={c.amber} /></ReadingArrow>
                <Reading $w={111} $sx={0.93} $tone="#b146bf"><b>M:0.003</b></Reading>
                <UpArrow tone="#b146bf" />
              </Indicator>
              <ChartBox $h={168}>
                <MacdChart />
                <AxisLabel $top={8} $tone={c.mute} $size={27}>0.034</AxisLabel>
                <AxisLabel $top={140} $tone={c.mute} $size={27}>-0.017</AxisLabel>
                <ExpandButton>
                  <svg width="30" height="31" viewBox="0 0 30 31" fill="none" stroke="#c9642f" strokeWidth="2.800">
                    <path d="M1.400 13V1.400H13M1.400 1.400L12 12M28.600 18v11.600H17M28.600 29.600L18 19" />
                  </svg>
                </ExpandButton>
              </ChartBox>
              <TimeAxis>
                <span>09:15</span><span>11:30/13:00</span><span>15:00</span>
              </TimeAxis>
            </ChartColumn>

            <OrderPanel>
              <OrderTabs>
                <OrderTab>五档</OrderTab>
                <OrderTab $on>大单</OrderTab>
                <OrderTab>分价</OrderTab>
              </OrderTabs>
              <DonutRow>
                <SideWord $tone={c.green}>主动卖</SideWord>
                <DonutBox>
                  <svg width="184" height="184" viewBox="0 0 184 184">
                    {slices.map(([a, b, fill]) => (
                      <path key={a} d={slicePath(a, b)} fill={fill} stroke="#fff" strokeWidth="1.300" />
                    ))}
                  </svg>
                  <DonutText>主买<br />资金</DonutText>
                </DonutBox>
                <SideWord $tone={c.red}>主动买</SideWord>
              </DonutRow>
              <OrderList>
                {orders.map(([name, amount, share, mark, tone], i) => (
                  <OrderRow key={i}>
                    <Marker $tone={mark} />
                    <span>{name}</span>
                    <Amount $tone={tone}>{amount}</Amount>
                    <Share>{share}</Share>
                  </OrderRow>
                ))}
              </OrderList>
              <DetailButton>查看大单明细<CaretRight /></DetailButton>
              <Promo>
                开通L2查看大单
                <PromoClose><Cross s={19} w={2.2} tone="#9d9794" /></PromoClose>
              </Promo>
            </OrderPanel>
          </Board>

          <BarrageRow>
            <RoundButton>
              <svg width="49" height="43" viewBox="0 0 49 43" fill="none" stroke="#5c5e5e" strokeWidth="2.600">
                <path d="M25 36.500H6a5 5 0 0 1-5-5V6a5 5 0 0 1 5-5h33a5 5 0 0 1 5 5v14" />
                <path d="M16 9.500h13M11 18.500h17M16 27.500h9" />
                <path d="M38.500 24.500l8 4.500v9l-8 4.500-8-4.500v-9z" />
                <circle cx="38.500" cy="33.500" r="2" fill="#5c5e5e" />
              </svg>
            </RoundButton>
            <BarrageInput>
              <Placeholder>弹幕走一波...</Placeholder>
              <SendToggle>
                弹
                <SendCheck width="20" height="20" viewBox="0 0 20 20">
                  <circle cx="10" cy="10" r="9.500" fill="#d2622c" stroke="#fff" strokeWidth="1" />
                  <path d="M5.500 10.500l3.500 3.500 6-7" fill="none" stroke="#fff" strokeWidth="2" />
                </SendCheck>
              </SendToggle>
            </BarrageInput>
          </BarrageRow>

          <Ticker>
            <svg width="40" height="34" viewBox="0 0 40 34" fill="#e05c28">
              <path d="M0 11h4v12H0zM7 9h6L40 0v34h-3l-9-3-3 1-10-3-2-6H7z" />
            </svg>
            <TickerText>涨幅居前，怎么选股？让收益率113%的大师</TickerText>
            <TickerRule />
            <IconSlot $ml={0}><Cross s={28} w={2} tone={c.orange} /></IconSlot>
          </Ticker>

          <BottomNav>
            <IndexBlock>
              <CaretUp />
              <IndexValue>18025.68</IndexValue>
              <IndexMeta>电力行业<IndexChange><Minus $gap={0}>-</Minus>0.02%</IndexChange></IndexMeta>
            </IndexBlock>
            <NavItem $size={44}>
              <NavIcon>
                <svg width="56" height="50" viewBox="0 0 56 50" fill="none" stroke="#636563" strokeWidth="2.400">
                  <path d="M14 5C30-5 52 5 51 27c-.3 4-1 7-2.500 10l6-3.500M43 45C26 55 4 45 4.500 24c.2-3 .8-6 2-9L1 17M0 16l7-3.500" />
                  <path d="M20 12l8 11 8-11M28 23v16M19 24h18M19 31h18" />
                </svg>
              </NavIcon>
              <NavLabel>交易</NavLabel>
            </NavItem>
            <NavItem $size={44}>
              <NavIcon>
                <svg width="48" height="48" viewBox="0 0 48 48" fill="none" stroke="#636563" strokeWidth="2.600">
                  <path d="M34 1.300H7A5.700 5.700 0 0 0 1.300 7v34A5.700 5.700 0 0 0 7 46.700h34a5.700 5.700 0 0 0 5.700-5.700V15" />
                  <path d="M16.500 32l4-9L38 5.500l3.500 3.500L24 27z" fill="#636563" stroke="none" />
                  <path d="M41 5.500l4-4" strokeWidth="5" />
                </svg>
              </NavIcon>
              <NavLabel>发帖</NavLabel>
            </NavItem>
            <NavItem $size={38}>
              <NavIcon>
                <svg width="46" height="46" viewBox="0 0 46 46" fill="none" stroke="#636563" strokeWidth="2.500">
                  <rect x="1.300" y="1.500" width="19" height="19.500" rx="3" />
                  <rect x="1.300" y="25.500" width="19" height="19.500" rx="3" />
                  <rect x="25.300" y="25.500" width="19" height="19.500" rx="3" />
                  <rect x="27.300" y="3.700" width="15.500" height="15.500" rx="2.500" transform="rotate(45 35 11.500)" />
                </svg>
              </NavIcon>
              <NavLabel>功能</NavLabel>
            </NavItem>
            <NavItem $size={45}>
              <NavIcon>
                <svg width="49" height="49" viewBox="0 0 49 49">
                  <circle cx="24.500" cy="24.500" r="23" fill="none" stroke="#636563" strokeWidth="2.400" />
                  <g fill="#636563"><circle cx="14" cy="24.500" r="2.600" /><circle cx="24.500" cy="24.500" r="2.600" /><circle cx="35" cy="24.500" r="2.600" /></g>
                </svg>
              </NavIcon>
              <NavLabel>设自选</NavLabel>
            </NavItem>
          </BottomNav>

          <Strokes width="836" height="1812" viewBox="122 311 836 1812" fill="none">
            <path d="M119.400 776H952M116.800 933H948" stroke="#c5673a" strokeWidth="3.500" strokeDasharray="20 13.800" />
          </Strokes>
          <Caption>大户买入不少，↗涨！</Caption>
          <Strokes width="836" height="1812" viewBox="122 311 836 1812" fill="none" stroke={c.pen} strokeWidth="9.800" strokeLinecap="round" strokeLinejoin="round">
            <path d={spline(strokeA)} />
            <path d={spline(strokeB)} />
          </Strokes>
        </Sheet>

        <TrashButton>
          <svg width="54" height="58" viewBox="0 0 54 58" fill="none" stroke="#2b2b2b" strokeWidth="4">
            <path d="M0 13h54M15 13V7a5 5 0 0 1 5-5h14a5 5 0 0 1 5 5v6M6 13v38a5 5 0 0 0 5 5h32a5 5 0 0 0 5-5V13M20.500 24v20M33.500 24v20" />
          </svg>
        </TrashButton>
      </Canvas>

      <ToolBar>
        <svg width="62" height="62" viewBox="0 0 62 62" fill="none" stroke="#333" strokeWidth="2.800">
          <rect x="3.400" y="16.400" width="34" height="34" />
          <circle cx="39" cy="24" r="21.500" />
          <path d="M17 58.500h43" strokeWidth="3.600" />
        </svg>
        <svg width="60" height="62" viewBox="0 0 60 62" fill="none" stroke="#333" strokeWidth="2.800" strokeLinejoin="round">
          <path d="M2 60L7 43 42.500 7a9.700 9.700 0 0 1 14 14L20.500 55.500zM7 43l13.500 12.500M38 11.500L52 25.500" />
        </svg>
        <svg width="58" height="62" viewBox="0 0 58 62" fill="none" stroke="#d2622c">
          <path d="M0 6h58" strokeWidth="4.500" />
          <path d="M29 6v55" strokeWidth="4.500" />
        </svg>
        <svg width="52" height="62" viewBox="0 0 52 62">
          <rect y="7" width="52" height="52" fill="#303030" />
          <path d="M26 10h22.500v22H26zM3.500 33H26v22.500H3.500z" fill="#fff" />
        </svg>
        <svg width="58" height="62" viewBox="0 0 58 62" fill="none" stroke="#333" strokeWidth="2.800">
          <path d="M0 18.500h46V61M13 6v42.500h45" />
        </svg>
      </ToolBar>
    </Screen>
  );
}
